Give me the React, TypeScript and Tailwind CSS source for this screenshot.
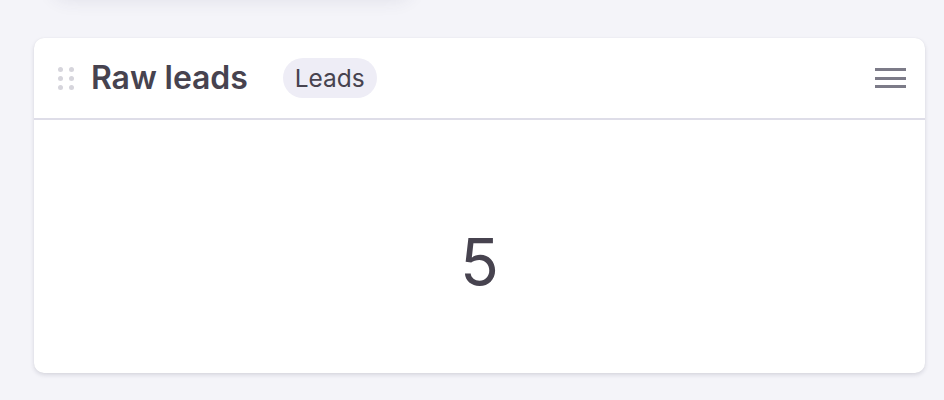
export default function App() {
  return (
    <div
      className="min-h-screen h-[400px] overflow-hidden bg-[#f4f4f9] pl-[34px] pr-[19px]"
      style={{ fontFamily: "Inter, 'Noto Sans', sans-serif" }}
    >
      {/* tail of the widget above, only its shadow shows */}
      <div className="ml-[18px] w-[360px] h-[40px] mt-[-46px] rounded-2xl bg-[#f4f4f9] shadow-[0_6px_18px_rgba(60,60,100,0.10)]" />

      <div className="mt-[44px] h-[335px] rounded-[10px] bg-white shadow-[0_2px_4px_rgba(40,40,70,0.14),0_0_1px_rgba(40,40,70,0.08)] flex flex-col overflow-hidden">
        <div className="h-[82px] shrink-0 flex items-center pl-[24px] pr-[19px] border-b-2 border-[#dedde8]">
          <div className="grid grid-cols-2 gap-x-[6px] gap-y-[4px] mr-[17px]">
            <span className="w-[5px] h-[5px] rounded-full bg-[#d6d5dc]" />
            <span className="w-[5px] h-[5px] rounded-full bg-[#d6d5dc]" />
            <span className="w-[5px] h-[5px] rounded-full bg-[#d6d5dc]" />
            <span className="w-[5px] h-[5px] rounded-full bg-[#d6d5dc]" />
            <span className="w-[5px] h-[5px] rounded-full bg-[#d6d5dc]" />
            <span className="w-[5px] h-[5px] rounded-full bg-[#d6d5dc]" />
          </div>
          <h2 className="text-[32px] leading-none font-semibold text-[#47434f] tracking-[-0.1px]">
            Raw leads
          </h2>
          <span className="ml-[35px] h-[40px] px-[12px] rounded-full bg-[#eeedf6] flex items-center text-[24.5px] text-[#47434f]">
            Leads
          </span>
          <button className="ml-auto w-[31px] flex flex-col gap-[5.5px]">
            <span className="h-[3px] w-full bg-[#7c7b88]" />
            <span className="h-[3px] w-full bg-[#7c7b88]" />
            <span className="h-[3px] w-full bg-[#7c7b88]" />
          </button>
        </div>
        <div className="flex-1 flex justify-center pt-[110px]">
          <span className="text-[64px] leading-none font-normal text-[#47434f]">5</span>
        </div>
      </div>
    </div>
  );
}
